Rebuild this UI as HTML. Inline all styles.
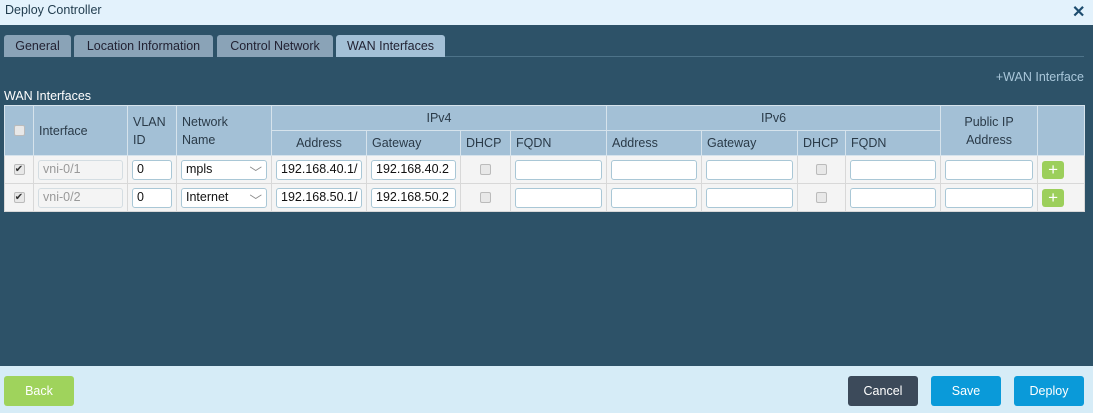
<!DOCTYPE html>
<html><head><meta charset="utf-8"><style>
*{box-sizing:border-box;margin:0;padding:0}
body{width:1093px;height:413px;overflow:hidden;background:#2d5268;font-family:"Liberation Sans",sans-serif;font-size:12px;position:relative}
.a{position:absolute}
.top{left:0;top:0;width:1093px;height:25px;background:#e3f2fc;color:#1f3b4d;font-size:12.5px;padding:3px 5px}
.tab{top:35px;height:22px;background:#8aa3b7;border-radius:3px 3px 0 0;color:#223;font-size:12.5px;text-align:center;line-height:23px}
.foot{left:0;top:366px;width:1093px;height:47px;background:#d6ecf7}
.btn{top:376px;height:30px;width:70px;border-radius:3px;color:#fff;font-size:12.5px;text-align:center;line-height:30px}
table{position:absolute;left:4px;top:105px;border-collapse:collapse;table-layout:fixed;width:1080px}
th{background:#a3c0d6;color:#2a3a48;font-weight:normal;font-size:12.5px;border:1px solid #d6e3ec;text-align:left;padding:0 5px;height:25px}
td{background:#f4f4f4;border:1px solid #d8d8d8;height:28px;padding:0 4px}
.in{height:20px;border:1px solid #a9c7d6;border-radius:3px;background:#fff;font-size:12.5px;padding:1px 4px;color:#111;white-space:nowrap;overflow:hidden;width:100%}
.dis{border-color:#d4dde2;background:#f4f4f4;color:#999}
.cb{width:11px;height:11px;border:1px solid #bbb;border-radius:2px;background:#e8e8e8;margin:auto;font-size:10px;line-height:9px;text-align:center;color:#333}
.plus{width:22px;height:18px;background:#9ccf5b;border-radius:3px;color:#fff;font-size:17px;line-height:17px;text-align:center}
</style></head><body>
<div class="a top">Deploy Controller</div>
<div class="a" style="left:1072px;top:2px;color:#1d4c6e;font-size:16px;font-weight:bold">✕</div>
<div class="a tab" style="left:4px;width:67px">General</div>
<div class="a tab" style="left:74px;width:139px">Location Information</div>
<div class="a tab" style="left:217px;width:116px">Control Network</div>
<div class="a tab" style="left:336px;width:109px;background:#a3c0d6">WAN Interfaces</div>
<div class="a" style="left:445px;top:56px;width:639px;height:1px;background:#4d7389"></div>
<div class="a" style="right:9px;top:70px;color:#a9c7da;font-size:12.5px">+WAN Interface</div>
<div class="a" style="left:4px;top:89px;color:#fff;font-size:12.5px">WAN Interfaces</div>
<table>
<colgroup><col style="width:29px"><col style="width:94px"><col style="width:49px"><col style="width:95px"><col style="width:95px"><col style="width:94px"><col style="width:50px"><col style="width:96px"><col style="width:95px"><col style="width:96px"><col style="width:48px"><col style="width:95px"><col style="width:97px"><col style="width:47px"></colgroup>
<tr><th rowspan="2"><div class="cb"></div></th><th rowspan="2">Interface</th><th rowspan="2" style="line-height:18px">VLAN<br>ID</th><th rowspan="2" style="line-height:18px">Network<br>Name</th><th colspan="4" style="text-align:center">IPv4</th><th colspan="4" style="text-align:center">IPv6</th><th rowspan="2" style="text-align:center;line-height:18px">Public IP<br>Address</th><th rowspan="2"></th></tr>
<tr><th style="text-align:center">Address</th><th>Gateway</th><th>DHCP</th><th>FQDN</th><th>Address</th><th>Gateway</th><th>DHCP</th><th>FQDN</th></tr>
<tr><td><div class="cb">✔</div></td><td><div class="in dis">vni-0/1</div></td><td><div class="in">0</div></td><td><div class="in">mpls<span style="float:right;color:#888">﹀</span></div></td><td><div class="in">192.168.40.1/</div></td><td><div class="in">192.168.40.2</div></td><td><div class="cb"></div></td><td><div class="in"></div></td><td><div class="in"></div></td><td><div class="in"></div></td><td><div class="cb"></div></td><td><div class="in"></div></td><td><div class="in"></div></td><td><div class="plus">+</div></td></tr>
<tr><td><div class="cb">✔</div></td><td><div class="in dis">vni-0/2</div></td><td><div class="in">0</div></td><td><div class="in">Internet<span style="float:right;color:#888">﹀</span></div></td><td><div class="in">192.168.50.1/</div></td><td><div class="in">192.168.50.2</div></td><td><div class="cb"></div></td><td><div class="in"></div></td><td><div class="in"></div></td><td><div class="in"></div></td><td><div class="cb"></div></td><td><div class="in"></div></td><td><div class="in"></div></td><td><div class="plus">+</div></td></tr>
</table>
<div class="a foot"></div>
<div class="a btn" style="left:4px;background:#9fd35c">Back</div>
<div class="a btn" style="left:848px;background:#3c4a5a">Cancel</div>
<div class="a btn" style="left:931px;background:#0a9ad9">Save</div>
<div class="a btn" style="left:1014px;background:#0a9ad9">Deploy</div>
</body></html>
